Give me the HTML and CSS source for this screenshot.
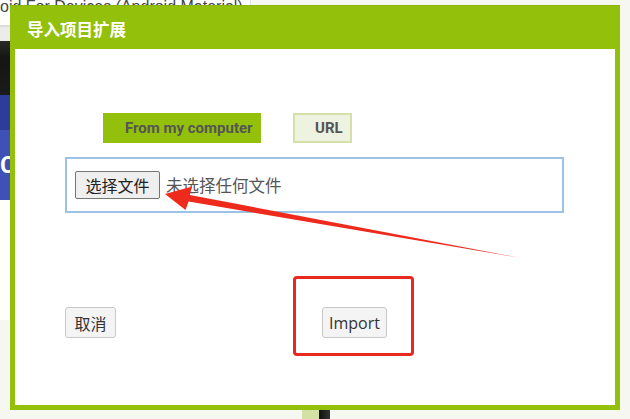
FILE: index.html
```html
<!DOCTYPE html>
<html lang="zh">
<head>
<meta charset="utf-8">
<link rel="stylesheet" href="styles.css">
</head>
<body>
<div class="page">
  <div class="topbar"><span class="apptitle">oid For Devices (Android Material)</span></div>
  <div class="leftnav">
    <div class="nav-gray"></div>
    <div class="nav-dark"></div>
    <div class="nav-navy"></div>
    <div class="nav-blue">C</div>
    <div class="nav-white"></div>
  </div>
  <div class="bottom-bits"><span class="bit-green"></span><span class="bit-black"></span></div>
</div>

<div class="dialog">
  <div class="dialog-header">导入项目扩展</div>
  <div class="dialog-body">
    <div class="tabs">
      <div class="tab tab-active">From my computer</div>
      <div class="tab tab-url">URL</div>
    </div>
    <div class="filebox">
      <span class="btn btn-file">选择文件</span>
      <span class="nofile">未选择任何文件</span>
    </div>
    <div class="actions">
      <span class="btn btn-cancel">取消</span>
      <span class="btn btn-import">Import</span>
    </div>
  </div>
</div>

<div class="highlight"></div>
<svg class="arrow" width="630" height="419" viewBox="0 0 630 419">
  <polygon points="165,194 192,186.5 189.8,195 518,257.5 188.6,201.6 185.5,210" fill="#ee2a1c"/>
</svg>
</body>
</html>
```
FILE: styles.css
```css
html, body {
  margin: 0;
  padding: 0;
}
body {
  width: 630px;
  height: 419px;
  overflow: hidden;
  background: #f6f7f1;
  font-family: "Noto Sans CJK SC", "Liberation Sans", sans-serif;
  position: relative;
}
.page {
  width: 630px;
  height: 419px;
  display: flex;
  flex-direction: column;
}
.topbar {
  width: 250px;
  height: 25px;
  background: #ffffff;
  border-bottom: 2px solid #dcdcdc;
  border-right: 1px solid #e2e2e2;
  overflow: hidden;
}
.apptitle {
  display: block;
  margin-top: -2px;
  font-family: "Liberation Sans", sans-serif;
  font-size: 16px;
  line-height: 18px;
  color: #444;
  white-space: nowrap;
}
.leftnav {
  width: 250px;
  display: flex;
  flex-direction: column;
}
.nav-gray { height: 14px; background: #ececec; }
.nav-dark { height: 54px; background: linear-gradient(#2a2a2a, #151515 30%, #1a1a1a); }
.nav-navy { height: 35px; background: #2e3c99; }
.nav-blue {
  height: 70px;
  background: #3f51b5;
  color: #fff;
  font-family: "Roboto", sans-serif;
  font-weight: bold;
  font-size: 24px;
  line-height: 70px;
}
.nav-white { height: 120px; background: #fff; }
.bottom-bits {
  margin-top: auto;
  margin-left: 302px;
  display: flex;
  height: 9px;
}
.bit-green { width: 17px; background: #d3e1a5; }
.bit-black { width: 11px; background: linear-gradient(90deg, #111, #333); }

.dialog {
  position: absolute;
  left: 10px;
  top: 5px;
  width: 610px;
  height: 405px;
  box-sizing: border-box;
  border: 5px solid #93c00b;
  border-top: 0;
  background: #fff;
  display: flex;
  flex-direction: column;
}
.dialog-header {
  height: 44px;
  margin: 0 -5px;
  background: #93c00b;
  color: #fff;
  font-weight: bold;
  font-size: 16.5px;
  line-height: 46px;
  padding-left: 17px;
  border-top: 1px solid #8ab508;
  box-sizing: border-box;
}
.dialog-body {
  flex: 1;
  padding: 64px 0 0 50px;
  display: flex;
  flex-direction: column;
}
.tabs {
  display: flex;
  gap: 32px;
  margin-left: 38px;
}
.tab {
  height: 30px;
  box-sizing: border-box;
  font-family: "Roboto", sans-serif;
  font-weight: bold;
  font-size: 15px;
  color: #555;
  line-height: 30px;
}
.tab-active {
  width: 158px;
  background: #93c00b;
  padding-left: 22px;
  white-space: nowrap;
}
.tab-url {
  width: 59px;
  background: #eef2e1;
  border: 2px solid #d5e0a9;
  line-height: 26px;
  padding-left: 20px;
}
.filebox {
  margin-top: 14px;
  width: 499px;
  height: 56px;
  box-sizing: border-box;
  border: 2px solid #9cc3e5;
  display: flex;
  align-items: center;
  padding: 0 0 0 8px;
}
.btn {
  display: inline-flex;
  align-items: center;
  justify-content: center;
  box-sizing: border-box;
  background: #f4f4f4;
  border: 1px solid #c8c8c8;
  border-radius: 3px;
  color: #222;
  font-size: 16px;
}
.btn-file {
  width: 85px;
  height: 28px;
  border-color: #767676;
  background: #efefef;
  border-radius: 2px;
  font-size: 16px;
}
.nofile {
  margin-left: 6px;
  font-size: 16.5px;
  color: #555;
}
.actions {
  margin-top: 94px;
  display: flex;
  align-items: center;
}
.btn-cancel {
  width: 51px;
  height: 31px;
  color: #333;
}
.btn-import {
  margin-left: 206px;
  width: 65px;
  height: 31px;
  font-family: "Open Sans", sans-serif;
  font-size: 16px;
  color: #333;
}
.highlight {
  position: absolute;
  left: 293px;
  top: 276px;
  width: 121px;
  height: 80px;
  box-sizing: border-box;
  border: 3px solid #e8291f;
  border-radius: 4px;
}
.arrow {
  position: absolute;
  left: 0;
  top: 0;
  pointer-events: none;
}
```
